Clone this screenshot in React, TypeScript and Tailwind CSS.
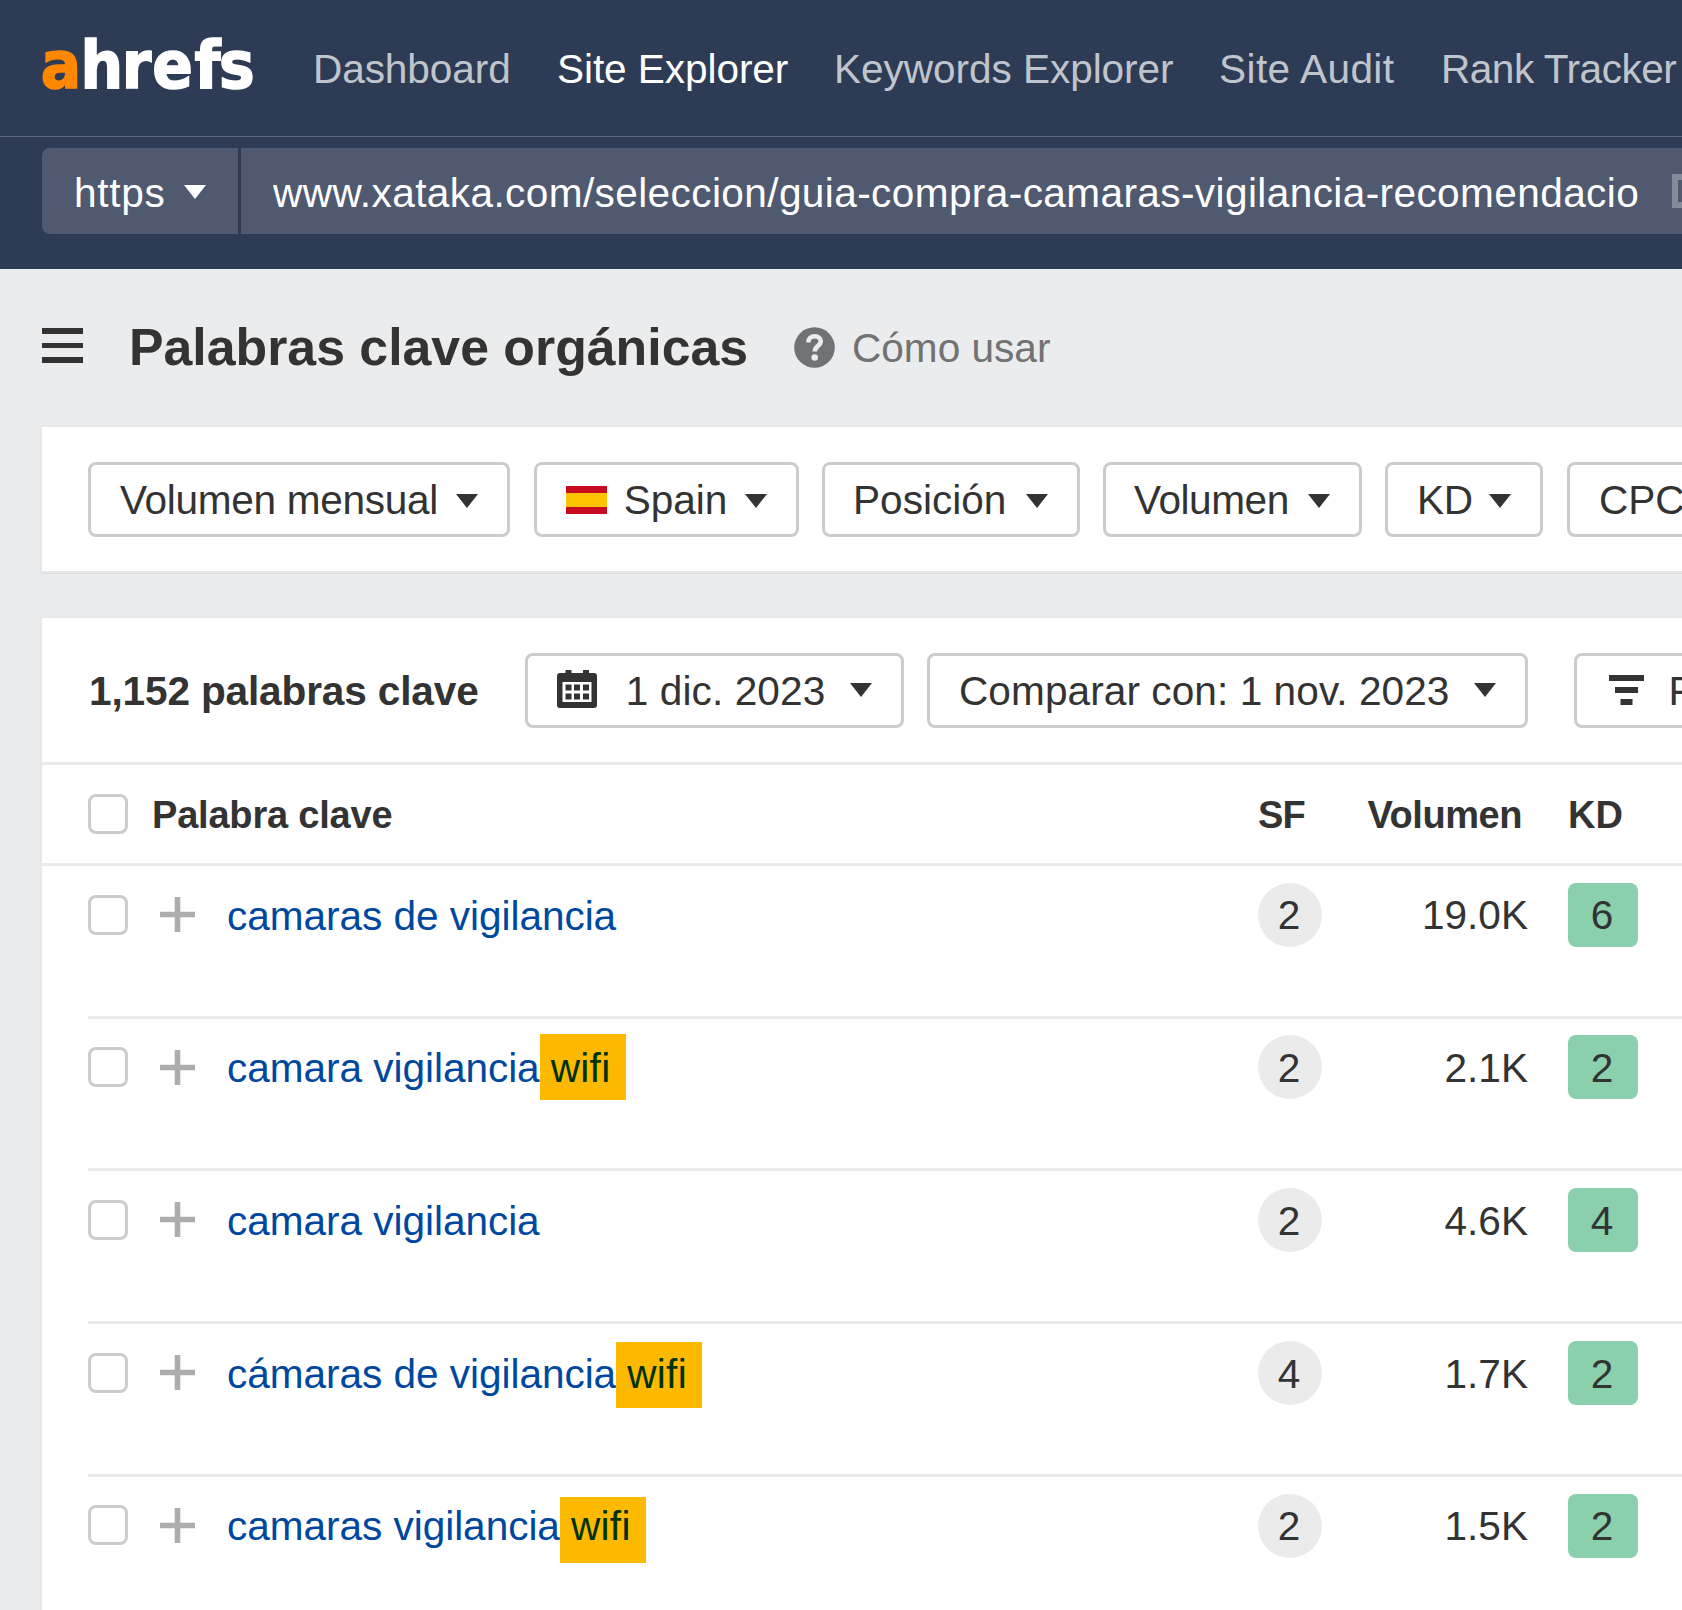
import React from "react";

const Caret = ({ className = "" }: { className?: string }) => (
  <svg className={`block h-3.5 w-[22px] shrink-0 ${className}`} viewBox="0 0 22 14" fill="currentColor">
    <path d="M0 0H22L11 14Z" />
  </svg>
);

const Logo = () => (
  <svg
    className="block h-[90px] w-[216px] shrink-0 overflow-visible"
    viewBox="0 -10 216 90"
    fontFamily="'DejaVu Sans Condensed','DejaVu Sans',sans-serif"
    fontWeight={700}
    fontSize={66.5}
    strokeWidth={1.6}
    aria-label="ahrefs"
  >
    <text x="-1.2" y="54.700" fill="#ff8800" stroke="#ff8800">a</text>
    <text x="38.500 79.800 110.300 152.500 177" y="54.700" fill="#ffffff" stroke="#ffffff">hrefs</text>
  </svg>
);

const HelpIcon = () => (
  <svg className="mb-0.5 block size-[41px] shrink-0" viewBox="0 0 41 41">
    <circle cx="20.500" cy="20.500" r="20.300" fill="#717274" />
    <path d="M14.300 15.600C14.300 11.400 16.900 9.200 20.700 9.200C24.300 9.200 26.800 11.300 26.800 14.500C26.800 18.800 20.800 19 20.800 24.400" fill="none" stroke="#ebeced" strokeWidth="4.600" />
    <circle cx="20.700" cy="30.500" r="3.300" fill="#ebeced" />
  </svg>
);

const Flag = () => (
  <svg className="mt-px block h-7 w-[41px] shrink-0" viewBox="0 0 41 28">
    <rect width="41" height="28" fill="#c60b1e" />
    <rect y="7" width="41" height="14" fill="#ffc400" />
  </svg>
);

const CalendarIcon = () => (
  <svg className="mt-[-3px] block h-[38px] w-10 shrink-0" viewBox="0 0 40 38" fill="currentColor">
    <path d="M8.500 0h6v3h11.500V0h6v3H37a3 3 0 0 1 3 3v29a3 3 0 0 1-3 3H3a3 3 0 0 1-3-3V6a3 3 0 0 1 3-3h5.500zM5.500 12v20h29V12z" fillRule="evenodd" />
    <path d="M8.500 14.500h6v6h-6zM17 14.500h6v6h-6zM26 14.500h6v6h-6zM8.500 23.500h6v6h-6zM17 23.500h6v6h-6zM26 23.500h6v6h-6z" />
  </svg>
);

const FilterIcon = () => (
  <svg className="block h-[30px] w-[35px] shrink-0" viewBox="0 0 35 30" fill="currentColor">
    <path d="M0 0h35v6H0zM6 12h23v6H6zM11.500 24h12v6h-12z" />
  </svg>
);

const Plus = () => (
  <svg className="block size-[35px] shrink-0" viewBox="0 0 35 35" fill="#adadad">
    <path d="M14.700 0h5.600v35h-5.600zM0 14.700h35v5.600H0z" />
  </svg>
);

const Checkbox = () => <span className="block size-10 shrink-0 rounded-lg border-[3px] border-[#cccccc] bg-white" />;

const Button = ({ className = "", children }: { className?: string; children: React.ReactNode }) => (
  <button
    className={`flex h-[75px] shrink-0 items-center justify-between whitespace-nowrap rounded-lg border-[3px] border-[#cccccc] bg-white px-[29px] ${className}`}
  >
    {children}
  </button>
);

const rows = [
  { text: "camaras de vigilancia", sf: 2, vol: "19.0K", kd: 6, mark: "" },
  { text: "camara vigilancia", sf: 2, vol: "2.1K", kd: 2, mark: "top-[15px]" },
  { text: "camara vigilancia", sf: 2, vol: "4.6K", kd: 4, mark: "" },
  { text: "cámaras de vigilancia", sf: 4, vol: "1.7K", kd: 2, mark: "top-[18px]" },
  { text: "camaras vigilancia", sf: 2, vol: "1.5K", kd: 2, mark: "top-[20px]" },
];

const nav = [
  { label: "Dashboard", w: "w-[244px] tracking-[-0.1px]" },
  { label: "Site Explorer", w: "w-[277px] tracking-[-0.08px]", active: true },
  { label: "Keywords Explorer", w: "w-[385px] tracking-[-0.06px]" },
  { label: "Site Audit", w: "w-[222px] tracking-[0.4px]" },
  { label: "Rank Tracker", w: "w-[240px] tracking-[-0.5px]" },
];

export default function App() {
  return (
    <div className="h-[1610px] w-[1682px] overflow-hidden bg-[#ebeced] font-['Liberation_Sans',Arial,sans-serif] text-[40.6px] leading-none text-[#333333]">
      <header className="h-[269px] bg-[#2e3b55] text-white">
        <div className="flex h-[137px] items-center border-b border-[#5b6680] pl-[42px]">
          <Logo />
          <nav className="ml-[55px] flex pt-[3px]">
            {nav.map((n) => (
              <a key={n.label} className={`shrink-0 whitespace-nowrap ${n.w} ${n.active ? "text-white" : "text-[#c0c4cc]"}`}>
                {n.label}
              </a>
            ))}
          </nav>
        </div>
        <div className="mt-[11px] ml-[42px] flex h-[86px] gap-[3px]">
          <div className="flex w-[196px] shrink-0 items-center rounded-l-lg bg-[#4f5970] pl-8">
            <span className="w-[110px] pt-[4px] tracking-[0.7px]">https</span>
            <Caret className="mt-0.5" />
          </div>
          <div className="flex grow items-center overflow-hidden bg-[#4f5970] pl-8">
            <div className="w-[1368px] shrink-0 overflow-hidden whitespace-nowrap pt-[4px] leading-[1.3] tracking-[0.39px]">
              www.xataka.com/seleccion/guia-compra-camaras-vigilancia-recomendaciones
            </div>
            <span className="ml-[31px] h-[34px] w-10 shrink-0 border-[6px] border-[#848b9b]" />
          </div>
        </div>
      </header>

      <div className="flex h-[158px] items-center pl-[42px]">
        <div className="mb-[5px] flex w-[41px] flex-col gap-[9px]">
          <span className="h-[5.500px] bg-[#333333]" />
          <span className="h-[5.500px] bg-[#333333]" />
          <span className="h-[5.500px] bg-[#333333]" />
        </div>
        <h1 className="ml-[46px] w-[665px] whitespace-nowrap text-[51.800px] font-bold">Palabras clave orgánicas</h1>
        <HelpIcon />
        <span className="ml-[17px] whitespace-nowrap text-[#717274]">Cómo usar</span>
      </div>

      <section className="ml-[42px] flex h-36 w-[1700px] items-center gap-[23px] bg-white pl-[46px] shadow-[0_0_0_2px_#e6e7e9,0_3px_0_0_#dddedf]">
        <Button className="w-[422px]">
          <span className="pt-[3px] tracking-[-0.3px]">Volumen mensual</span>
          <Caret className="mt-[3px]" />
        </Button>
        <Button className="ml-px w-[265px]">
          <Flag />
          <span className="pt-[3px] pr-px tracking-[-0.1px]">Spain</span>
          <Caret className="mt-[3px]" />
        </Button>
        <Button className="w-[258px]">
          <span className="-ml-px pt-[3px]">Posición</span>
          <Caret className="mt-[3px]" />
        </Button>
        <Button className="w-[259px]">
          <span className="-ml-px pt-[3px] tracking-[-0.45px]">Volumen</span>
          <Caret className="mt-[3px]" />
        </Button>
        <Button className="w-[158px]">
          <span className="pt-[3px] tracking-[-0.3px]">KD</span>
          <Caret className="mt-[3px]" />
        </Button>
        <Button className="ml-px w-[190px]">
          <span className="pt-[3px]">CPC</span>
          <Caret className="mt-[3px]" />
        </Button>
      </section>

      <section className="mt-[47px] ml-[42px] w-[1700px] bg-white shadow-[0_0_0_2px_#e6e7e9]">
        <div className="flex h-[147px] items-center border-b-[3px] border-[#eaeaeb] pl-[47px]">
          <span className="w-[436px] shrink-0 whitespace-nowrap pt-0.5 font-bold tracking-[-0.15px]">1,152 palabras clave</span>
          <Button className="w-[379px]">
            <CalendarIcon />
            <span className="ml-1 pt-0.5 tracking-[0.1px]">1 dic. 2023</span>
            <Caret />
          </Button>
          <Button className="ml-[23px] w-[601px]">
            <span className="pt-0.5 tracking-[0.07px]">Comparar con: 1 nov. 2023</span>
            <Caret />
          </Button>
          <Button className="ml-[46px] w-[240px] pl-8!">
            <FilterIcon />
            <span className="pt-0.5 pr-[3px]">Filtros</span>
          </Button>
        </div>

        <div className="flex h-[101px] items-center border-b-[3px] border-[#eaeaeb] pl-[46px] text-[38px] font-bold">
          <Checkbox />
          <span className="ml-6 w-[1106px] pt-px tracking-[-0.2px]">Palabra clave</span>
          <span className="w-[62px] pt-px tracking-[-0.9px]">SF</span>
          <span className="w-[202px] pt-px text-right tracking-[-0.45px]">Volumen</span>
          <span className="ml-[46px] pt-px">KD</span>
        </div>

        {rows.map((r, i) => (
          <div key={i} className="ml-[46px] flex h-[152.700px] items-start border-b-[3px] border-[#eaeaeb]">
            <div className="flex h-[97px] items-center">
              <Checkbox />
              <span className="ml-8">
                <Plus />
              </span>
            </div>
            <div className="relative ml-8 flex h-full w-[1031px]">
              <a className="flex h-[100px] items-center whitespace-nowrap tracking-[-0.05px] text-[#00489f]">{r.text}</a>
              {r.mark && (
                <div className="relative w-0">
                  <span className={`absolute left-0 ${r.mark} h-[66px] w-[86px] bg-[#fcb900]`} />
                  <span className="absolute top-0 left-[11px] flex h-[100px] items-center tracking-[0.3px] text-[#003208]">wifi</span>
                </div>
              )}
            </div>
            <div className="flex h-[97.500px] items-center">
              <span className="flex size-16 items-center justify-center rounded-full bg-[#ebebeb] pt-0.5 pr-0.5">{r.sf}</span>
              <span className="w-[206px] pt-0.5 text-right">{r.vol}</span>
              <span className="ml-10 flex h-16 w-[70px] items-center justify-center rounded-lg bg-[#8bd0ac] pt-0.5 pr-0.5">{r.kd}</span>
            </div>
          </div>
        ))}
      </section>
    </div>
  );
}
